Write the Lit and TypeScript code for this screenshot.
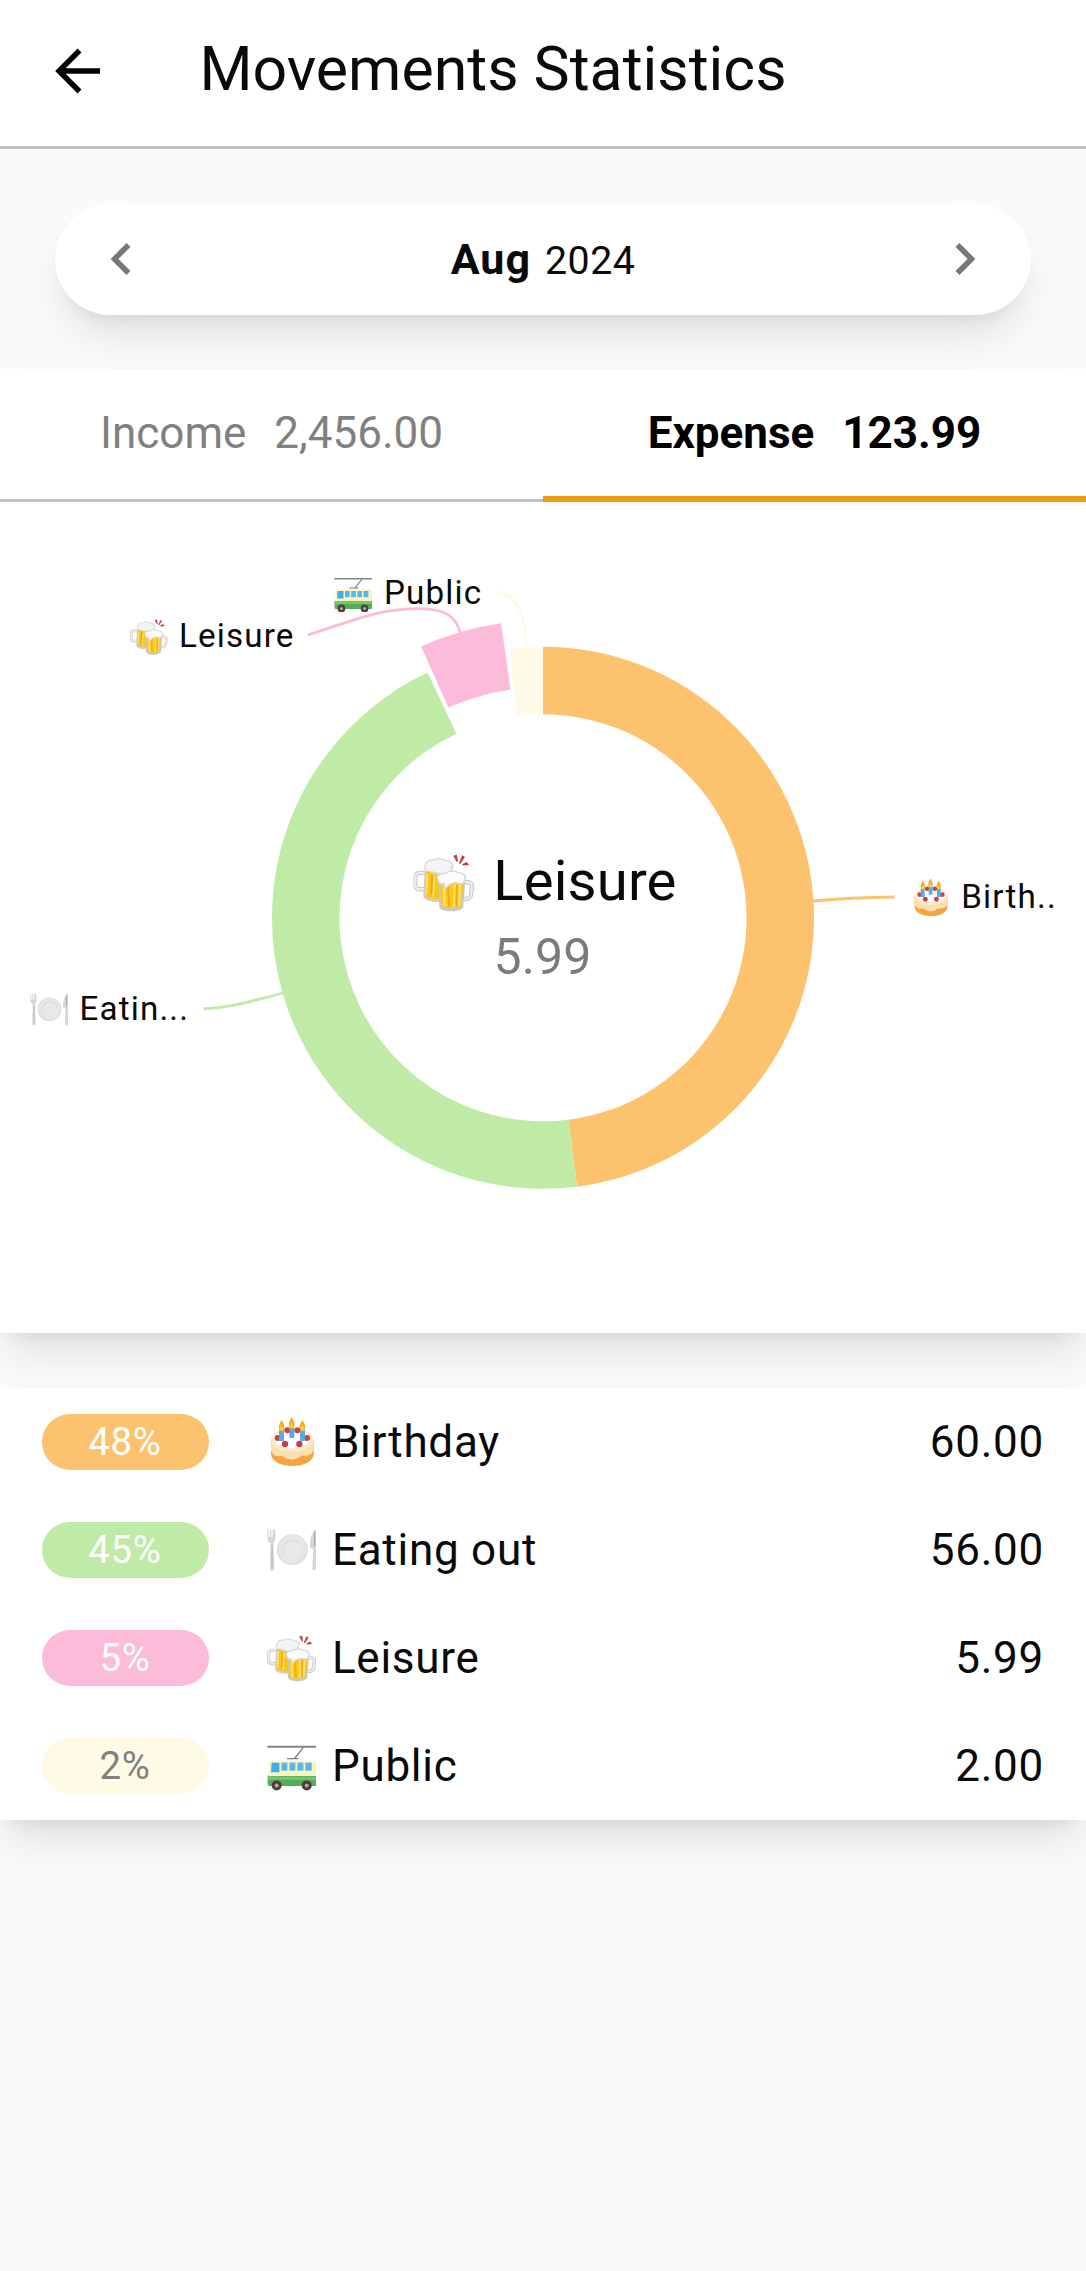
import { LitElement, html, css, svg } from "lit";
import type { TemplateResult } from "lit";
import { customElement } from "lit/decorators.js";

type IconName = "cake" | "plate" | "beer" | "bus";

interface Category {
  name: string;
  label: string;
  icon: IconName;
  percent: number;
  amount: string;
  color: string;
  tone: string;
}

const CATEGORIES: Category[] = [
  { name: "Birthday", label: "Birth..", icon: "cake", percent: 48, amount: "60.00", color: "#fcc26e", tone: "orange" },
  { name: "Eating out", label: "Eatin...", icon: "plate", percent: 45, amount: "56.00", color: "#bfeba6", tone: "green" },
  { name: "Leisure", label: "Leisure", icon: "beer", percent: 5, amount: "5.99", color: "#fcbbd8", tone: "pink" },
  { name: "Public", label: "Public", icon: "bus", percent: 2, amount: "2.00", color: "#fffae5", tone: "cream" },
];

const ICONS: Record<IconName, { box: string; art: TemplateResult }> = {
  cake: {
    box: "52 53 148 148",
    art: svg`
      <path d="M64 120V162C64 212 192 212 192 162V120Z" fill="#f3a640"/>
      <path d="M64 120V154C76 180 92 164 104 173C116 184 138 182 150 173C164 163 180 178 192 152V120Z" fill="#fbdfb0"/>
      <ellipse cx="128" cy="121" rx="64" ry="35" fill="#fdebcd"/>
      <ellipse cx="128" cy="119" rx="52" ry="27" fill="#fff"/>
      <g fill="#cf3d48"><circle cx="113" cy="93" r="9"/><circle cx="143" cy="93" r="9"/><circle cx="84" cy="116" r="9"/><circle cx="172" cy="116" r="9"/><circle cx="106" cy="134" r="9.5"/><circle cx="149" cy="134" r="9.5"/></g>
      <g fill="#55aee2"><rect x="88" y="92" width="15" height="33" rx="3"/><rect x="119" y="84" width="15" height="32" rx="3"/><rect x="151" y="92" width="15" height="33" rx="3"/></g>
      <g fill="#f7ae25"><path d="M96 62C107 78 108 92 96 97C84 92 85 78 96 62Z"/><path d="M126 53C137 70 138 85 126 90C114 85 115 70 126 53Z"/><path d="M158 62C169 78 170 92 158 97C146 92 147 78 158 62Z"/></g>
      <g fill="#ffd84e"><ellipse cx="96" cy="87" rx="4" ry="6"/><ellipse cx="126" cy="80" rx="4" ry="6"/><ellipse cx="158" cy="87" rx="4" ry="6"/></g>`,
  },
  plate: {
    box: "52 377 148 148",
    art: svg`
      <g fill="#d6d6d6"><path d="M53 390H57V413H61V390H65V413H69V390H73V390H77V418C77 425 74 430 71 432L74 508C74 515 60 515 61 508L63 432C57 428 53 423 53 416Z"/>
      <path d="M200 389V507C200 515 187 515 188 507L190 447H181C180 421 184 397 200 389Z"/></g>
      <path d="M195 396V440" stroke="#aaa" stroke-width="4"/><path d="M67 436V506" stroke="#b5b5b5" stroke-width="3"/>
      <circle cx="128" cy="451" r="46" fill="#d9d9d9"/><circle cx="128" cy="450" r="43" fill="#e7e7e7"/>
      <circle cx="128" cy="451" r="30" fill="#dadada"/><circle cx="129" cy="453" r="28" fill="#e9e9e9"/>`,
  },
  beer: {
    box: "40 19 184 184",
    art: svg`
      <rect x="46" y="84" width="35" height="49" rx="12" fill="none" stroke="#c9c9c9" stroke-width="13"/>
      <rect x="46" y="84" width="35" height="49" rx="12" fill="none" stroke="#ececec" stroke-width="7"/>
      <path d="M75 64L70 153C71 171 120 177 138 164L152 70Z" fill="#cfcfcf"/>
      <path d="M80 66L76 150C84 163 119 166 132 157L146 74Z" fill="#fbc51c"/>
      <path d="M82 88L79 148M103 92L100 155" stroke="#ffe16a" stroke-width="6"/>
      <path d="M97 84L94 148" stroke="#f1a511" stroke-width="5"/>
      <path d="M75 84C66 50 88 40 103 44C116 33 131 42 139 45C157 45 166 57 158 72C166 89 127 95 114 88C100 83 105 90 95 87C90 76 81 78 75 84Z" fill="#dadada"/>
      <path d="M78 78C72 54 90 45 104 48C116 38 130 46 138 49C152 49 160 58 154 70C155 84 126 89 114 83C101 79 90 76 78 78Z" fill="#f4f4f4"/>
      <path d="M188 112H203C216 112 217 118 216 130L213 151C211 161 199 163 185 162" fill="none" stroke="#c6c6c6" stroke-width="13"/>
      <path d="M188 112H203C216 112 217 118 216 130L213 151C211 161 199 163 185 162" fill="none" stroke="#ededed" stroke-width="7"/>
      <path d="M116 106L118 187C127 204 181 203 190 186L196 106Z" fill="#c7c7c7"/>
      <path d="M121 108L124 180C134 192 176 192 185 180L190 108Z" fill="#fcc91b"/>
      <path d="M132 120L134 184M164 118L163 187M180 120L177 182" stroke="#ffe164" stroke-width="7"/>
      <path d="M144 121L148 185M171 120L170 184" stroke="#f2ab12" stroke-width="6"/>
      <path d="M112 108C104 91 119 82 135 84C149 72 169 76 176 82C194 80 204 94 197 108C199 119 180 122 168 116C154 117 153 122 147 122C143 137 131 134 130 119C119 122 113 114 112 108Z" fill="#d9d9d9"/>
      <path d="M116 105C110 94 121 86 137 88C150 77 167 80 175 86C190 85 198 95 192 106C193 115 179 116 168 111C153 112 151 117 143 118C140 130 135 126 135 114C124 116 119 112 116 105Z" fill="#fcfcfc"/>
      <g fill="#c63c3a"><path d="M160 32L171 29L174 50L170 51Z"/><path d="M187 31L195 36L181 57L177 55Z"/><path d="M200 51L208 60L188 62L187 58Z"/></g>`,
  },
  bus: {
    box: "52 1024 148 148",
    art: svg`
      <path d="M53 1041H200" stroke="#858585" stroke-width="6"/>
      <path d="M161 1043L135 1076M112 1077H146" stroke="#7a7a7a" stroke-width="4" fill="none"/>
      <path d="M64 1083H192Q200 1083 200 1091V1134H56L60 1087Q61 1083 64 1083Z" fill="#fbf3c0"/>
      <path d="M54 1129H201V1153Q201 1159 195 1159H60Q54 1159 54 1153Z" fill="#52ae58"/>
      <path d="M54 1127L66 1131H201V1140H54Z" fill="#7cc46a"/>
      <path d="M66 1089H89V1118H64Z" fill="#41aee6"/>
      <g fill="#55b8e8"><rect x="95" y="1089" width="18" height="24"/><rect x="119" y="1089" width="18" height="24"/><rect x="143" y="1089" width="18" height="24"/><rect x="167" y="1089" width="19" height="24"/></g>
      <g fill="#503c3a"><circle cx="81" cy="1157" r="15"/><circle cx="171" cy="1157" r="15"/></g>
      <g fill="#b9a6a0"><circle cx="81" cy="1157" r="6"/><circle cx="171" cy="1157" r="6"/></g>`,
  },
};

const icon = (name: IconName) =>
  html`<svg class="emoji" viewBox=${ICONS[name].box} aria-hidden="true">${ICONS[name].art}</svg>`;

const chartIcon = (name: IconName, x: number, y: number, size: number) =>
  svg`<svg x=${x} y=${y} width=${size} height=${size} viewBox=${ICONS[name].box}>${ICONS[name].art}</svg>`;

const CX = 543;
const CY = 917.8;

const point = (r: number, deg: number) => {
  const a = (deg * Math.PI) / 180;
  return `${(CX + r * Math.sin(a)).toFixed(2)} ${(CY - r * Math.cos(a)).toFixed(2)}`;
};

const segment = (inner: number, outer: number, from: number, to: number) => {
  const large = to - from > 180 ? 1 : 0;
  return `M${point(outer, from)}A${outer} ${outer} 0 ${large} 1 ${point(outer, to)}L${point(inner, to)}A${inner} ${inner} 0 ${large} 0 ${point(inner, from)}Z`;
};

@customElement("donut-chart")
export class DonutChart extends LitElement {
  static styles = css`
    :host { display: block; }
    svg { display: block; }
    .chart { width: 1086px; height: 830.7px; }
    text { font-family: Roboto, "Liberation Sans", sans-serif; fill: #0a0a0a; }
    .label { font-size: 33.2px; letter-spacing: 1.15px; }
    .name { font-size: 56.2px; letter-spacing: 0.2px; }
    .value { font-size: 50px; letter-spacing: 0.1px; fill: #7b7b7b; }
    .leader { fill: none; stroke-width: 2.8; }
  `;

  render() {
    const [orange, green, pink, cream] = CATEGORIES;
    return html`
      <svg class="chart" viewBox="0 502 1086 830.7">
        <path d=${segment(203.5, 271, 0, 172.8)} fill=${orange.color} />
        <path d=${segment(203.5, 271, 172.8, 334.8)} fill=${green.color} />
        <path d=${segment(230.5, 297.5, 335.8, 351.9)} fill=${pink.color} />
        <path d=${segment(203.5, 271, 352.8, 360)} fill=${cream.color} />

        <path class="leader" stroke=${orange.color} d="M813 901Q850 897.5 894.5 897" />
        <path class="leader" stroke=${green.color} d="M203.5 1008.7C226 1009 252 1001 283 993" />
        <path class="leader" stroke=${pink.color} d="M307.7 635C353 621 376 608.7 420 608.7C446 609 456 617 460 632" />
        <path class="leader" stroke=${cream.color} d="M495 592.5C521 593 526 622 526.5 648" />

        ${chartIcon(orange.icon, 911.5, 878.5, 38)}
        <text class="label" x="961.3" y="908">${orange.label}</text>
        ${chartIcon(green.icon, 30, 990.3, 38)}
        <text class="label" x="79.5" y="1020">${green.label}</text>
        ${chartIcon(pink.icon, 130, 617.5, 38)}
        <text class="label" x="179" y="647">${pink.label}</text>
        ${chartIcon(cream.icon, 334, 574.3, 38)}
        <text class="label" x="384" y="604.4">${cream.label}</text>

        ${chartIcon(pink.icon, 413.3, 851.3, 61.3)}
        <text class="name" x="493.2" y="900.5">${pink.name}</text>
        <text class="value" x="493.5" y="974">${pink.amount}</text>
      </svg>
    `;
  }
}

@customElement("app-root")
export class AppRoot extends LitElement {
  static styles = css`
    :host {
      display: block;
      min-height: 2271px;
      background: #fafafa;
      color: #0a0a0a;
      font-family: Roboto, "Liberation Sans", sans-serif;
      white-space: nowrap;
    }
    svg { display: block; flex: none; }
    .bar {
      display: flex;
      align-items: center;
      gap: 93.5px;
      box-sizing: border-box;
      height: 148.5px;
      padding: 0 50px 4px;
      background: #fff;
      border-bottom: 3px solid #c0c0c0;
    }
    .back { width: 56px; height: 56px; }
    .title { margin: 0; font-size: 60.8px; font-weight: 400; line-height: 1; }
    .period { padding: 55.2px 55px 54.6px; }
    .pill {
      display: flex;
      align-items: center;
      justify-content: space-between;
      box-sizing: border-box;
      height: 111px;
      padding: 0 51px;
      border-radius: 56px;
      background: #fff;
      box-shadow: 0 27px 41px -8px rgba(0, 0, 0, 0.1), 0 11px 17px -11px rgba(0, 0, 0, 0.1);
    }
    .chevron { width: 28px; height: 36px; }
    .month { display: flex; align-items: baseline; gap: 14px; font-size: 39.3px; letter-spacing: 0.5px; }
    .month b { font-size: 43px; font-weight: 700; letter-spacing: 1px; }
    .card {
      background: #fff;
      box-shadow: 0 27px 41px -8px rgba(0, 0, 0, 0.1), 0 11px 17px -11px rgba(0, 0, 0, 0.1);
    }
    .tabs { display: grid; grid-template-columns: 1fr 1fr; height: 133px; }
    .tab {
      display: flex;
      align-items: center;
      justify-content: center;
      gap: 28px;
      box-sizing: border-box;
      padding-bottom: 3px;
      border-bottom: 3px solid #c0c0c0;
      color: #808080;
      font-size: 44px;
    }
    .active { padding-bottom: 0; border-bottom: 6px solid #ee9c17; color: #000; font-weight: 700; }
    .list { margin-top: 55px; }
    .row { display: flex; align-items: center; height: 108px; padding: 0 42px 0 41.5px; font-size: 44px; letter-spacing: 0.75px; }
    .badge {
      display: flex;
      align-items: center;
      justify-content: center;
      width: 167px;
      height: 55.5px;
      margin-right: 58.5px;
      border-radius: 28px;
      color: #fff;
      font-size: 38.3px;
    }
    .orange { background: #fcc26e; }
    .green { background: #bfeba6; }
    .pink { background: #fcbbd8; }
    .cream { background: #fffae5; color: #808080; }
    .emoji { width: 49.4px; height: 49.4px; margin-right: 15.5px; }
    .amount { margin-left: auto; }
  `;

  render() {
    return html`
      <header class="bar">
        <svg class="back" viewBox="0 0 56 56" fill="none" stroke="#000" stroke-width="5.4">
          <path d="M50 28H10M29.5 7.5L9 28L29.5 48.5" />
        </svg>
        <h1 class="title">Movements Statistics</h1>
      </header>
      <section class="period">
        <div class="pill">
          <svg class="chevron" viewBox="0 0 28 36" fill="none" stroke="#777" stroke-width="5.5">
            <path d="M22.5 4L8.5 18L22.5 32" />
          </svg>
          <div class="month"><b>Aug</b><span>2024</span></div>
          <svg class="chevron" viewBox="0 0 28 36" fill="none" stroke="#777" stroke-width="5.5">
            <path d="M5.5 4L19.5 18L5.5 32" />
          </svg>
        </div>
      </section>
      <section class="card">
        <nav class="tabs">
          <div class="tab"><span>Income</span><span>2,456.00</span></div>
          <div class="tab active"><span>Expense</span><span>123.99</span></div>
        </nav>
        <donut-chart></donut-chart>
      </section>
      <section class="card list">
        ${CATEGORIES.map(
          (c) => html`
            <div class="row">
              <span class="badge ${c.tone}">${c.percent}%</span>
              ${icon(c.icon)}
              <span>${c.name}</span>
              <span class="amount">${c.amount}</span>
            </div>
          `,
        )}
      </section>
    `;
  }
}
